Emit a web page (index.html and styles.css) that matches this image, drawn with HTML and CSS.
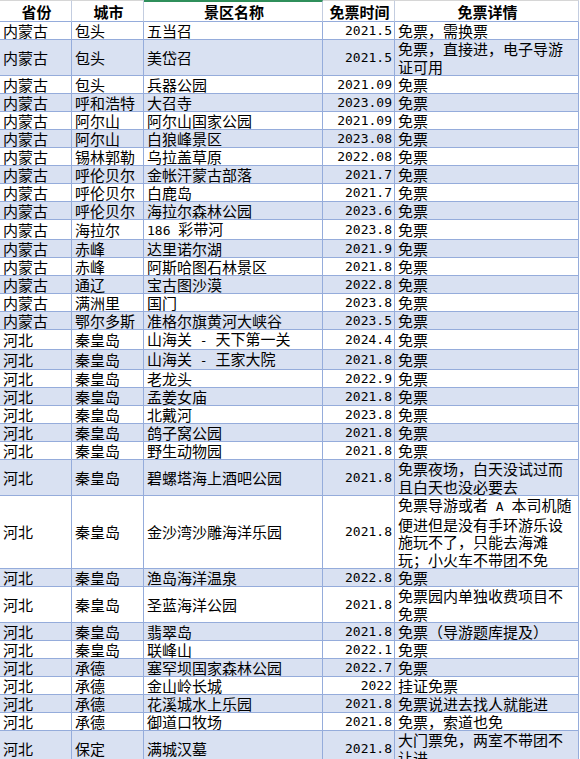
FILE: index.html
```html
<!DOCTYPE html>
<html lang="zh-CN">
<head>
<meta charset="utf-8">
<title>免票景区</title>
<link rel="stylesheet" href="styles.css">
</head>
<body>
<table class="sheet">
  <colgroup>
    <col class="c-prov"><col class="c-city"><col class="c-name"><col class="c-date"><col class="c-info">
  </colgroup>
  <thead>
    <tr class="head">
      <th>省份</th><th>城市</th><th class="sel">景区名称</th><th>免票时间</th><th>免票详情</th>
    </tr>
  </thead>
  <tbody>
    <tr><td>内蒙古</td><td>包头</td><td>五当召</td><td class="num">2021.5</td><td>免票，需换票</td></tr>
    <tr class="alt h2"><td>内蒙古</td><td>包头</td><td>美岱召</td><td class="num">2021.5</td><td>免票，直接进，电子导游<br>证可用</td></tr>
    <tr><td>内蒙古</td><td>包头</td><td>兵器公园</td><td class="num">2021.09</td><td>免票</td></tr>
    <tr class="alt"><td>内蒙古</td><td>呼和浩特</td><td>大召寺</td><td class="num">2023.09</td><td>免票</td></tr>
    <tr><td>内蒙古</td><td>阿尔山</td><td>阿尔山国家公园</td><td class="num">2021.09</td><td>免票</td></tr>
    <tr class="alt"><td>内蒙古</td><td>阿尔山</td><td>白狼峰景区</td><td class="num">2023.08</td><td>免票</td></tr>
    <tr><td>内蒙古</td><td>锡林郭勒</td><td>乌拉盖草原</td><td class="num">2022.08</td><td>免票</td></tr>
    <tr class="alt"><td>内蒙古</td><td>呼伦贝尔</td><td>金帐汗蒙古部落</td><td class="num">2021.7</td><td>免票</td></tr>
    <tr><td>内蒙古</td><td>呼伦贝尔</td><td>白鹿岛</td><td class="num">2021.7</td><td>免票</td></tr>
    <tr class="alt"><td>内蒙古</td><td>呼伦贝尔</td><td>海拉尔森林公园</td><td class="num">2023.6</td><td>免票</td></tr>
    <tr><td>内蒙古</td><td>海拉尔</td><td><span class="lat">186 </span>彩带河</td><td class="num">2023.8</td><td>免票</td></tr>
    <tr class="alt"><td>内蒙古</td><td>赤峰</td><td>达里诺尔湖</td><td class="num">2021.9</td><td>免票</td></tr>
    <tr><td>内蒙古</td><td>赤峰</td><td>阿斯哈图石林景区</td><td class="num">2021.8</td><td>免票</td></tr>
    <tr class="alt"><td>内蒙古</td><td>通辽</td><td>宝古图沙漠</td><td class="num">2022.8</td><td>免票</td></tr>
    <tr><td>内蒙古</td><td>满洲里</td><td>国门</td><td class="num">2023.8</td><td>免票</td></tr>
    <tr class="alt"><td>内蒙古</td><td>鄂尔多斯</td><td>准格尔旗黄河大峡谷</td><td class="num">2023.5</td><td>免票</td></tr>
    <tr><td>河北</td><td>秦皇岛</td><td>山海关<span class="lat"> - </span>天下第一关</td><td class="num">2024.4</td><td>免票</td></tr>
    <tr class="alt"><td>河北</td><td>秦皇岛</td><td>山海关<span class="lat"> - </span>王家大院</td><td class="num">2021.8</td><td>免票</td></tr>
    <tr><td>河北</td><td>秦皇岛</td><td>老龙头</td><td class="num">2022.9</td><td>免票</td></tr>
    <tr class="alt"><td>河北</td><td>秦皇岛</td><td>孟姜女庙</td><td class="num">2021.8</td><td>免票</td></tr>
    <tr><td>河北</td><td>秦皇岛</td><td>北戴河</td><td class="num">2023.8</td><td>免票</td></tr>
    <tr class="alt"><td>河北</td><td>秦皇岛</td><td>鸽子窝公园</td><td class="num">2021.8</td><td>免票</td></tr>
    <tr><td>河北</td><td>秦皇岛</td><td>野生动物园</td><td class="num">2021.8</td><td>免票</td></tr>
    <tr class="alt h2"><td>河北</td><td>秦皇岛</td><td>碧螺塔海上酒吧公园</td><td class="num">2021.8</td><td>免票夜场，白天没试过而<br>且白天也没必要去</td></tr>
    <tr class="h4"><td>河北</td><td>秦皇岛</td><td>金沙湾沙雕海洋乐园</td><td class="num">2021.8</td><td>免票导游或者<span class="lat"> A </span>本司机随<br>便进但是没有手环游乐设<br>施玩不了，只能去海滩<br>玩；小火车不带团不免</td></tr>
    <tr class="alt"><td>河北</td><td>秦皇岛</td><td>渔岛海洋温泉</td><td class="num">2022.8</td><td>免票</td></tr>
    <tr class="h2"><td>河北</td><td>秦皇岛</td><td>圣蓝海洋公园</td><td class="num">2021.8</td><td>免票园内单独收费项目不<br>免票</td></tr>
    <tr class="alt"><td>河北</td><td>秦皇岛</td><td>翡翠岛</td><td class="num">2021.8</td><td>免票（导游题库提及）</td></tr>
    <tr><td>河北</td><td>秦皇岛</td><td>联峰山</td><td class="num">2022.1</td><td>免票</td></tr>
    <tr class="alt"><td>河北</td><td>承德</td><td>塞罕坝国家森林公园</td><td class="num">2022.7</td><td>免票</td></tr>
    <tr><td>河北</td><td>承德</td><td>金山岭长城</td><td class="num">2022</td><td>挂证免票</td></tr>
    <tr class="alt"><td>河北</td><td>承德</td><td>花溪城水上乐园</td><td class="num">2021.8</td><td>免票说进去找人就能进</td></tr>
    <tr><td>河北</td><td>承德</td><td>御道口牧场</td><td class="num">2021.8</td><td>免票，索道也免</td></tr>
    <tr class="alt h2"><td>河北</td><td>保定</td><td>满城汉墓</td><td class="num">2021.8</td><td>大门票免，两室不带团不<br>让进</td></tr>
  </tbody>
</table>
</body>
</html>
```

FILE: styles.css
```css
html, body {
  margin: 0;
  padding: 0;
  background: #ffffff;
}

.sheet {
  border-collapse: separate;
  border-spacing: 0;
  table-layout: fixed;
  width: 579px;
  font-family: "Noto Sans CJK SC", "Noto Sans", sans-serif;
  font-size: 15px;
  color: #000;
}

.c-prov { width: 72px; }
.c-city { width: 72px; }
.c-name { width: 179px; }
.c-date { width: 72px; }
.c-info { width: 184px; }

.sheet th,
.sheet td {
  box-sizing: border-box;
  padding: 0 1px 0 3px;
  border-right: 1px solid #95acdb;
  border-bottom: 1px solid #95acdb;
  white-space: nowrap;
  vertical-align: middle;
  text-align: left;
}

.sheet td {
  height: 18px;
  line-height: 17px;
}

.head th {
  height: 21px;
  line-height: 19px;
  font-weight: 700;
  text-align: center;
  border-top: 1px solid #d6d6d6;
  border-right-color: #c3cde0;
  border-bottom-color: #95acdb;
  background: #fff;
}

.head th.sel {
  border-top: 2px solid #2f8f5b;
}

.alt td {
  background: #d9e1f2;
}

.h2 td {
  height: 36px;
  line-height: 17.5px;
}

.h4 td {
  height: 72px;
  line-height: 17.5px;
}

.sheet td.num {
  font-family: "DejaVu Sans Mono", "Liberation Mono", monospace;
  font-size: 13px;
  text-align: right;
  padding: 0 2px 0 0;
}

.lat {
  font-family: "DejaVu Sans Mono", "Liberation Mono", monospace;
  font-size: 13px;
}
```
